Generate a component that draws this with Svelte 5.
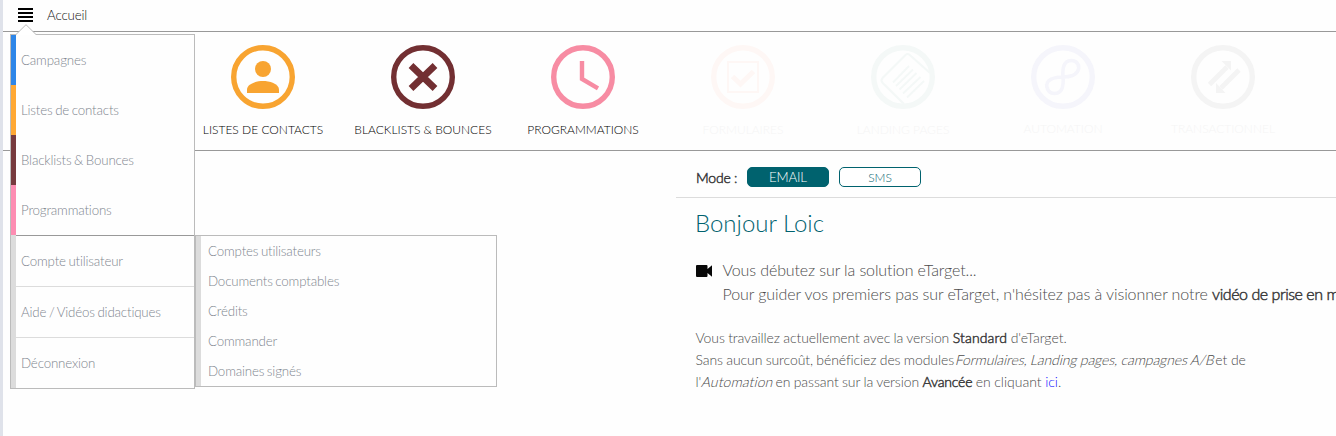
<script>
  const modules = [
    { label: 'Listes de contacts', icon: 'contact', color: '#f8a431' },
    { label: 'Blacklists & Bounces', icon: 'cross', color: '#722f32' },
    { label: 'Programmations', icon: 'clock', color: '#f78ca3' },
    { label: 'Formulaires', icon: 'check', color: '#fef7f5', off: true },
    { label: 'Landing pages', icon: 'page', color: '#f4f8f7', off: true },
    { label: 'Automation', icon: 'loop', color: '#f5f5fb', off: true, raised: true },
    { label: 'Transactionnel', icon: 'arrows', color: '#f4f4f4', off: true, raised: true }
  ];
  const menu = [
    { label: 'Campagnes', color: '#2e86e8' },
    { label: 'Listes de contacts', color: '#ffa834' },
    { label: 'Blacklists & Bounces', color: '#773a3e' },
    { label: 'Programmations', color: '#fd8db2' },
    { label: 'Compte utilisateur', color: '#dcdcdc', line: '#999' },
    { label: 'Aide / Vidéos didactiques', color: '#dcdcdc', line: '#dcdcdc' },
    { label: 'Déconnexion', color: '#dcdcdc', line: '#dcdcdc' }
  ];
  const submenu = ['Comptes utilisateurs', 'Documents comptables', 'Crédits', 'Commander', 'Domaines signés'];
</script>

<div class="page">
  <header>
    <div class="burger"><i></i><i></i><i></i><i></i></div>
    <span class="home">Accueil</span>
  </header>

  <nav class="modules">
    {#each modules as m}
      <div class="module" class:off={m.off} class:raised={m.raised} style="color:{m.color}">
        <svg width="64" height="64" viewBox="0 0 64 64" fill="none" stroke="currentColor">
          <circle cx="32" cy="32" r="29.3" stroke-width="5.4" />
          {#if m.icon === 'contact'}
            <g fill="currentColor" stroke="none">
              <circle cx="32" cy="24" r="8" />
              <path d="M16 48v-3.500C16 38.500 26 36 32 36s16 2.500 16 8.500V48z" />
            </g>
          {:else if m.icon === 'cross'}
            <path d="M20 20.500L44 43.500M44 20.500L20 43.500" stroke-width="6.800" />
          {:else if m.icon === 'clock'}
            <path d="M31 16v18l16 9.300" stroke-width="4.400" />
          {:else if m.icon === 'check'}
            <path d="M17 17h30v30H17z" stroke-width="2" />
            <path d="M21.500 31.500l8 7.500L42.500 26.500" stroke-width="5" />
          {:else if m.icon === 'page'}
            <path d="M59 28L38.500 9.800q-2-1.600-4 .2L11.500 33q-2 2.500 0 4.800L33 59" stroke-width="2" />
            <path d="M22 37.500L38 21M25 41L42 24.500M28.500 44.500L45.500 28M32 48.500L49.500 32M36 52.500L53 36" stroke-width="1.800" />
          {:else if m.icon === 'loop'}
            <path d="M32 32C31 21 34 15.500 40.500 15.500c6 0 9 6 6 11C43.500 31.500 38 32 32 32c-6 0-11 .500-14.500 4C13.500 41 17 48.500 23.500 48.500 30 48.500 33 43 32 32z" stroke-width="3.600" />
          {:else}
            <path d="M18.500 39.500L36 22M48 25L30 43" stroke-width="4.600" />
            <path d="M30.500 16H40v9.500zM25 38v10h9.500z" fill="currentColor" stroke="none" />
          {/if}
        </svg>
        <span>{m.label}</span>
      </div>
    {/each}
  </nav>

  <main>
    <div class="mode">
      <b>Mode :</b>
      <button class="active">EMAIL</button>
      <button>SMS</button>
    </div>
    <h1>Bonjour Loic</h1>
    <div class="intro">
      <svg width="16" height="12" viewBox="0 0 16 12"><path d="M1 0h9.500q1 0 1 1v3L16 .300v11.400L11.500 8v3q0 1-1 1H1q-1 0-1-1V1q0-1 1-1z" fill="#080808" /></svg>
      <p><span class="lead">Vous débutez sur la solution eTarget...</span><br />Pour guider vos premiers pas sur eTarget, n'hésitez pas à visionner notre <b>vidéo de prise en main</b></p>
    </div>
    <p class="version"><span class="tight">Vous travaillez actuellement avec la version</span> <b class="wide">Standard</b> d'eTarget.<br /><span class="tight">Sans aucun surcoût, bénéficiez des modules</span> <em>Formulaires, Landing pages, campagnes A/B</em> et de<br />l'<em class="short">Automation</em> <span class="tight">en passant sur la version</span> <b>Avancée</b> en cliquant <a href="#ici">ici</a>.</p>
  </main>

  <div class="menu">
    <svg class="tip" width="20" height="11" viewBox="0 0 20 11"><path d="M0 10.500L10 .700 20 10.500V11H0z" fill="#fff" /><path d="M0 10.500L10 .700 20 10.500" fill="none" stroke="#bbb" /></svg>
    {#each menu as item}
      <div class="item" class:lined={item.line} style="--bar:{item.color};--line:{item.line ?? 'transparent'}"><span>{item.label}</span></div>
    {/each}
    <div class="submenu">
      {#each submenu as label}
        <div>{label}</div>
      {/each}
    </div>
  </div>
</div>

<style>
  :global(body) { margin: 0; background: #fefefe; overflow: hidden; }
  .page {
    position: relative; box-sizing: border-box; width: 1336px; height: 436px; overflow: hidden;
    border-left: 3px solid #dfe2ea; background: #fefefe;
    font: 300 14px/20px Lato, sans-serif; color: #4c4c4c;
  }
  header { box-sizing: border-box; height: 32px; border-bottom: 1px solid #999; display: flex; padding: 8px 0 0 15px; }
  .burger { display: flex; flex-direction: column; gap: 2px; width: 15px; margin-right: 14px; }
  .burger i { height: 2px; background: #000; }
  .home { line-height: 14px; color: #111; font-size: 13.333px; letter-spacing: -0.15px; }
  .modules { box-sizing: border-box; height: 119px; border-bottom: 1px solid #999; display: flex; padding: 13px 0 0 180px; }
  .module { width: 160px; flex: none; display: flex; flex-direction: column; align-items: center; }
  .module svg { display: block; }
  .module span { margin-top: 12px; line-height: 18px; font-size: 12px; text-transform: uppercase; white-space: nowrap; color: #000; }
  .module.off span { color: #f5f5f5; }
  .module.raised span { margin-top: 11px; }
  main { margin-left: 673px; white-space: nowrap; }
  b { font-weight: 300; color: #3c3c3c; -webkit-text-stroke: 0.5px #3c3c3c; letter-spacing: -0.2px; }
  .intro b { letter-spacing: -0.45px; }
  .wide { letter-spacing: 0.15px; }
  .mode { box-sizing: border-box; height: 47px; border-bottom: 1px solid #dcdcdc; display: flex; padding: 16px 0 0 20px; }
  .mode b { width: 51px; line-height: 21px; }
  button { box-sizing: border-box; width: 82px; height: 20px; margin-right: 10px; padding: 0; border: 1px solid #00626e; border-radius: 5px; background: #fff; color: #00626e; font: 300 12px/19px Lato, sans-serif; }
  button.active { background: #00626e; color: #fff; font-size: 13.333px; line-height: 18px; letter-spacing: -0.2px; }
  h1 { margin: 10px 0 1px 19px; font-size: 24px; line-height: 30px; font-weight: 300; color: #00626e; }
  .intro { display: flex; padding: 19px 0 0 20px; }
  .intro svg { margin: 7px 11px 0 0; flex: none; }
  .intro p { margin: 0 0 0 -0.5px; font-size: 16px; line-height: 24px; letter-spacing: -0.085px; }
  .intro .lead { letter-spacing: -0.11px; }
  .version { margin: 21px 0 0 19.500px; font-size: 14px; line-height: 22px; word-spacing: -0.3px; }
  .tight { letter-spacing: -0.1px; }
  em { display: inline-block; font-style: normal; transform: skewX(-14deg); letter-spacing: -0.1px; margin: 0 -3px 0 -1.5px; }
  em.short { margin: 0 -1.500px 0 0.5px; letter-spacing: 0.1px; }
  a { color: #11f; text-decoration: none; }
  .menu { position: absolute; left: 7px; top: 34px; box-sizing: border-box; width: 185px; border: 1px solid #bbb; background: #fefefe; color: #7f868f; font-size: 13.333px; letter-spacing: -0.17px; word-spacing: -0.8px; }
  .tip { position: absolute; left: 5px; top: -11px; }
  .item { display: flex; height: 50px; border-left: 5px solid var(--bar); background: #fefefe; }
  .item span { flex: 1; padding-left: 5px; line-height: 50px; }
  .item.lined { height: 51px; }
  .item.lined span { border-top: 1px solid var(--line); }
  .submenu { position: absolute; left: 184px; top: 200px; box-sizing: border-box; width: 302px; height: 152px; border: 1px solid #bbb; background: #fefefe; }
  .submenu div { height: 30px; line-height: 30px; border-left: 5px solid #dcdcdc; padding-left: 7px; }
</style>
